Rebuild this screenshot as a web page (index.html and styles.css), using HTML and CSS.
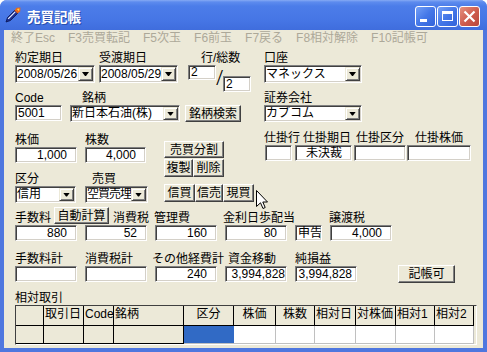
FILE: index.html
```html
<!DOCTYPE html>
<html lang="ja">
<head>
<meta charset="utf-8">
<title>売買記帳</title>
<link rel="stylesheet" href="styles.css">
</head>
<body>
<div class="window">
  <div class="titlebar">
    <svg class="appicon" width="16" height="16" viewBox="0 0 16 16">
      <path d="M1 15 L2.5 10.5 L10 3 L13 6 L5.5 13.5 Z" fill="#1b2d8f" stroke="#0a154f" stroke-width="0.8"/>
      <path d="M3.2 11.8 L10.2 4.8" stroke="#e8f0ff" stroke-width="1.2"/>
      <path d="M9.5 3.5 L11.5 0.8 L15.4 0.6 L15.2 4.5 L12.5 6.5 Z" fill="#e8661a"/>
      <path d="M11.8 2 L14.4 1.6 L14 4.2 Z" fill="#ffd24a"/>
    </svg>
    <span class="title">売買記帳</span>
    <div class="winbtns">
      <div class="wb"><span class="g-min"></span></div>
      <div class="wb"><span class="g-max"></span></div>
      <div class="wb wb-close"><svg width="19" height="19" viewBox="0 0 19 19"><path d="M4.5 4.5 L14.5 14.5 M14.5 4.5 L4.5 14.5" stroke="#fff" stroke-width="2.2"/></svg></div>
    </div>
  </div>
  <div class="frame">
    <div class="client">
      <div class="menubar">
        <span>終了Esc</span><span>F3売買転記</span><span>F5次玉</span><span>F6前玉</span><span>F7戻る</span><span>F8相対解除</span><span>F10記帳可</span>
      </div>
      <div class="form">
        <div class="row row-a">
          <div class="fld w80">
            <div class="lbl">約定期日</div>
            <div class="combo tall"><span class="val">2008/05/26</span><span class="dd"></span></div>
          </div>
          <div class="fld w79 ml4">
            <div class="lbl">受渡期日</div>
            <div class="combo tall"><span class="val">2008/05/29</span><span class="dd"></span></div>
          </div>
          <div class="fld w70 ml9">
            <div class="lbl pl14">行/総数</div>
            <div class="pair">
              <div class="inp h15 w28 ml1">2</div>
              <span class="slash">/</span>
              <div class="inp w28 low">2</div>
            </div>
          </div>
          <div class="fld w98 ml7">
            <div class="lbl">口座</div>
            <div class="combo tall"><span class="val">マネックス</span><span class="dd"></span></div>
          </div>
        </div>

        <div class="row row-b">
          <div class="fld w48">
            <div class="lbl">Code</div>
            <div class="inp w47">5001</div>
          </div>
          <div class="fld w110 ml7">
            <div class="lbl pl12">銘柄</div>
            <div class="combo"><span class="val">新日本石油(株)</span><span class="dd"></span></div>
          </div>
          <div class="btn b-search">銘柄検索</div>
          <div class="fld w98 ml23">
            <div class="lbl">証券会社</div>
            <div class="combo"><span class="val">カブコム</span><span class="dd"></span></div>
          </div>
        </div>

        <div class="band">
          <div class="lcol">
            <div class="row">
              <div class="fld w62">
                <div class="lbl lh14">株価</div>
                <div class="inp num">1,000</div>
              </div>
              <div class="fld w61 ml8">
                <div class="lbl lh14">株数</div>
                <div class="inp num">4,000</div>
              </div>
            </div>
            <div class="row rowd">
              <div class="fld w61">
                <div class="lbl lh14">区分</div>
                <div class="combo"><span class="val">信用</span><span class="dd"></span></div>
              </div>
              <div class="fld w63 ml9">
                <div class="lbl lh14 pl7">売買</div>
                <div class="combo"><span class="val narrow">空買売埋</span><span class="dd"></span></div>
              </div>
            </div>
          </div>
          <div class="bcol">
            <div class="btn w60 h17">売買分割</div>
            <div class="brow mt1">
              <div class="btn w29 h18">複製</div>
              <div class="btn w31 h18">削除</div>
            </div>
            <div class="brow mt7">
              <div class="btn w31 h18">信買</div>
              <div class="btn w28 h18">信売</div>
              <div class="btn w31 h18">現買</div>
            </div>
          </div>
          <div class="rcol">
            <div class="rlbls">
              <span class="w39">仕掛行</span><span class="w53">仕掛期日</span><span class="w59">仕掛区分</span><span>仕掛株価</span>
            </div>
            <div class="rinps">
              <div class="inp w27"></div>
              <div class="inp w57 ml3 ctr">未決裁</div>
              <div class="inp w52 ml2"></div>
              <div class="inp w64 ml1"></div>
            </div>
          </div>
        </div>

        <div class="row-e">
          <div class="elbls">
            <span class="w39">手数料</span>
            <div class="btn w55 h17 top">自動計算</div>
            <span class="w41 ml4">消費税</span>
            <span class="w69">管理費</span>
            <span class="w106">金利日歩配当</span>
            <span>譲渡税</span>
          </div>
          <div class="inps">
            <div class="inp w62 num">880</div>
            <div class="inp w62 num">52</div>
            <div class="inp w62 num">160</div>
            <div class="inp w62 num">80</div>
            <div class="inp w27">申告</div>
            <div class="inp w62 num">4,000</div>
          </div>
        </div>

        <div class="row-f">
          <div class="flbls">
            <span class="w70">手数料計</span><span class="w67">消費税計</span><span class="w76">その他経費計</span><span class="w67">資金移動</span><span>純損益</span>
          </div>
          <div class="inps">
            <div class="inp w62"></div>
            <div class="inp w62"></div>
            <div class="inp w62 num">240</div>
            <div class="inp w62 num tight">3,994,828</div>
            <div class="inp w62 num mid">3,994,828</div>
            <div class="btn w57 h18 b-kicho">記帳可</div>
          </div>
        </div>

        <div class="lbl lh14 lbl-g">相対取引</div>
        <div class="grid">
          <div class="gh"></div>
          <div class="gh pl2">取引日</div>
          <div class="gh">Code</div>
          <div class="gh pl2">銘柄</div>
          <div class="gh ctr">区分</div>
          <div class="gh ctr">株価</div>
          <div class="gh ctr">株数</div>
          <div class="gh">相対日</div>
          <div class="gh">対株価</div>
          <div class="gh">相対1</div>
          <div class="gh pl2">相対2</div>
          <div class="gx"></div>
          <div class="gf"></div>
          <div class="gf"></div>
          <div class="gf"></div>
          <div class="gf"></div>
          <div class="gs"></div>
          <div class="gw"></div>
          <div class="gw"></div>
          <div class="gw"></div>
          <div class="gw"></div>
          <div class="gw"></div>
          <div class="gw"></div>
          <div class="gx"></div>
        </div>
      </div>
    </div>
  </div>
  <svg class="cursor" width="12" height="19" viewBox="0 0 12 19"><path d="M0.5 0.5 V16.5 L4.5 12.8 L7 18.5 L9.2 17.5 L6.8 12 H11.5 Z" fill="#fff" stroke="#000" stroke-width="1"/></svg>
</div>
</body>
</html>
```

FILE: styles.css
```css
* { box-sizing: border-box; margin: 0; padding: 0; }
html, body { width: 487px; height: 352px; overflow: hidden; }
body {
  background: #fff;
  font-family: "Liberation Sans", "Noto Sans CJK JP", sans-serif;
  font-size: 12px;
  color: #000;
}

.window {
  position: relative;
  width: 487px;
  height: 352px;
  display: flex;
  flex-direction: column;
  border-radius: 7px 7px 0 0;
  overflow: hidden;
  background: #4f77df;
}

.titlebar {
  flex: none;
  height: 30px;
  display: flex;
  align-items: flex-start;
  background: linear-gradient(#86aaf4 0px, #5d8bee 2px, #4c7de9 6px, #4676e5 20px, #3f6ddd 30px);
}
.appicon { flex: none; margin: 7px 0 0 5px; }
.title {
  margin: 10px 0 0 6px;
  font-size: 13.5px;
  font-weight: bold;
  line-height: 15px;
  color: #fff;
  text-shadow: 1px 1px 0 #2a4fae;
}
.winbtns { margin: 6px 7px 0 auto; display: flex; gap: 1px; }
.wb {
  width: 21px;
  height: 21px;
  border: 1px solid #fff;
  border-radius: 3px;
  background: linear-gradient(135deg, #74a0f6 0%, #4477e8 50%, #3263da 100%);
  display: flex;
  align-items: flex-start;
}
.wb-close { background: linear-gradient(135deg, #e6907f 0%, #cd5b4c 55%, #b9473c 100%); }
.g-min { width: 7px; height: 3px; background: #fff; margin: 12px 0 0 4px; }
.g-max { width: 11px; height: 10px; border: 1px solid #fff; border-top-width: 3px; margin: 4px 0 0 4px; }

.frame { flex: 1; display: flex; padding: 0 4px 4px; min-height: 0; }
.client {
  flex: 1;
  background: #ece9d8;
  overflow: hidden;
  display: flex;
  flex-direction: column;
}

.menubar {
  flex: none;
  height: 18px;
  display: flex;
  gap: 13px;
  padding: 2px 0 0 7px;
  line-height: 13px;
  color: #aca899;
  white-space: nowrap;
}

.form { padding-left: 11px; }

.row { display: flex; align-items: flex-start; }
.fld { display: flex; flex-direction: column; flex: none; }
.lbl { line-height: 13px; white-space: nowrap; }
.lh14 { line-height: 14px; }

.row-a { margin-top: 4px; }

.pair { display: flex; align-items: flex-start; }
.slash {
  width: 7px;
  font-family: "Liberation Serif", serif;
  font-size: 24px;
  line-height: 24px;
  margin-top: 0;
  text-align: center;
  flex: none;
}
.low { margin-top: 11px; }

/* controls */
.inp {
  flex: none;
  background: #fff;
  border: 1px solid;
  border-color: #808080 #fff #fff #808080;
  box-shadow: inset 1px 1px 0 #404040, inset -1px -1px 0 #d4d0c8;
  height: 16px;
  line-height: 14px;
  padding: 0 1px 0 2px;
  white-space: nowrap;
  overflow: hidden;
}
.inp.h15 { height: 15px; line-height: 13px; }
.num { text-align: right; padding-right: 9px; }
.num.tight { padding-right: 1px; }
.num.mid { padding-right: 4px; }
.ctr { text-align: center; }

.combo {
  display: flex;
  background: #fff;
  border: 1px solid;
  border-color: #808080 #fff #fff #808080;
  box-shadow: inset 1px 1px 0 #404040, inset -1px -1px 0 #d4d0c8;
  padding: 1px;
  height: 17px;
}
.combo.tall { height: 18px; }
.val { flex: 1; min-width: 0; line-height: 13px; white-space: nowrap; overflow: hidden; }
.val.narrow { letter-spacing: -1px; }
.tall .val { line-height: 14px; }
.dd {
  flex: none;
  width: 15px;
  background: #ece9d8;
  border: 1px solid;
  border-color: #ece9d8 #404040 #404040 #ece9d8;
  box-shadow: inset 1px 1px 0 #fff, inset -1px -1px 0 #808080;
  display: flex;
  align-items: center;
  justify-content: center;
}
.dd::after {
  content: "";
  width: 7px;
  height: 4px;
  background: #000;
  clip-path: polygon(0 0, 7px 0, 4px 4px, 3px 4px);
}

.btn {
  flex: none;
  background: #ece9d8;
  border: 1px solid;
  border-color: #fff #404040 #404040 #fff;
  box-shadow: inset -1px -1px 0 #808080;
  display: flex;
  align-items: center;
  justify-content: center;
  line-height: 12px;
  white-space: nowrap;
}
.b-search { width: 56px; height: 17px; margin: 13px 0 0 5px; }

/* widths and spacings */
.w27 { width: 27px; } .w28 { width: 28px; } .w29 { width: 29px; } .w31 { width: 31px; }
.w39 { width: 39px; } .w41 { width: 41px; } .w47 { width: 47px; } .w48 { width: 48px; }
.w52 { width: 52px; } .w53 { width: 53px; } .w55 { width: 55px; } .w57 { width: 57px; }
.w59 { width: 59px; } .w60 { width: 60px; } .w61 { width: 61px; } .w62 { width: 62px; }
.w63 { width: 63px; } .w64 { width: 64px; } .w67 { width: 67px; } .w69 { width: 69px; }
.w70 { width: 70px; } .w76 { width: 76px; } .w79 { width: 79px; } .w80 { width: 80px; }
.w98 { width: 98px; } .w106 { width: 106px; } .w110 { width: 110px; }
.h17 { height: 17px; } .h18 { height: 18px; }
.ml1 { margin-left: 1px; } .ml2 { margin-left: 2px; } .ml3 { margin-left: 3px; }
.ml4 { margin-left: 4px; } .ml7 { margin-left: 7px; } .ml8 { margin-left: 8px; }
.ml9 { margin-left: 9px; } .ml23 { margin-left: 23px; }
.mt1 { margin-top: 1px; } .mt7 { margin-top: 7px; }
.pl2 { padding-left: 2px; } .pl7 { padding-left: 7px; } .pl12 { padding-left: 12px; } .pl14 { padding-left: 14px; }

/* band with price rows, buttons and pending fields */
.band { display: flex; align-items: flex-start; }
.lcol { width: 135px; flex: none; margin-top: 11px; }
.rowd { margin-top: 9px; }
.bcol { width: 90px; flex: none; margin: 19px 0 0 14px; }
.brow { display: flex; }
.rcol { flex: none; margin: 9px 0 0 10px; }
.rlbls { display: flex; line-height: 14px; white-space: nowrap; }
.rlbls span { flex: none; }
.rinps { display: flex; margin-left: 1px; }

.row-e { margin-top: 4px; }
.elbls { display: flex; align-items: flex-end; height: 18px; white-space: nowrap; }
.elbls span { flex: none; line-height: 13px; }
.top { align-self: flex-start; }
.inps { display: flex; gap: 8px; align-items: flex-start; }

.row-f { margin-top: 11px; }
.flbls { display: flex; line-height: 14px; white-space: nowrap; }
.flbls span { flex: none; }
.b-kicho { margin: -1px 0 0 33px; }

.lbl-g { margin-top: 8px; }

.grid {
  width: 462px;
  display: grid;
  grid-template-columns: 28px 40px 30px 70px 50px 42px 39px 41px 40px 39px 39px 1fr;
  grid-template-rows: 20px 18px;
  border: 1px solid;
  border-color: #404040 #fff #fff #404040;
  background: #ece9d8;
}
.gh, .gf {
  background: #ece9d8;
  border-right: 1px solid #000;
  border-bottom: 1px solid #000;
}
.gh {
  line-height: 14px;
  padding: 1px 0 0 1px;
  white-space: nowrap;
  overflow: hidden;
}
.gh.ctr { padding-left: 0; }
.gs { background: #316ac5; border-bottom: 1px solid #c0c0c0; }
.gw { background: #fff; border-right: 1px solid #c0c0c0; border-bottom: 1px solid #c0c0c0; }
.gx { background: #ece9d8; }

.cursor { position: absolute; left: 256px; top: 190px; }
```
